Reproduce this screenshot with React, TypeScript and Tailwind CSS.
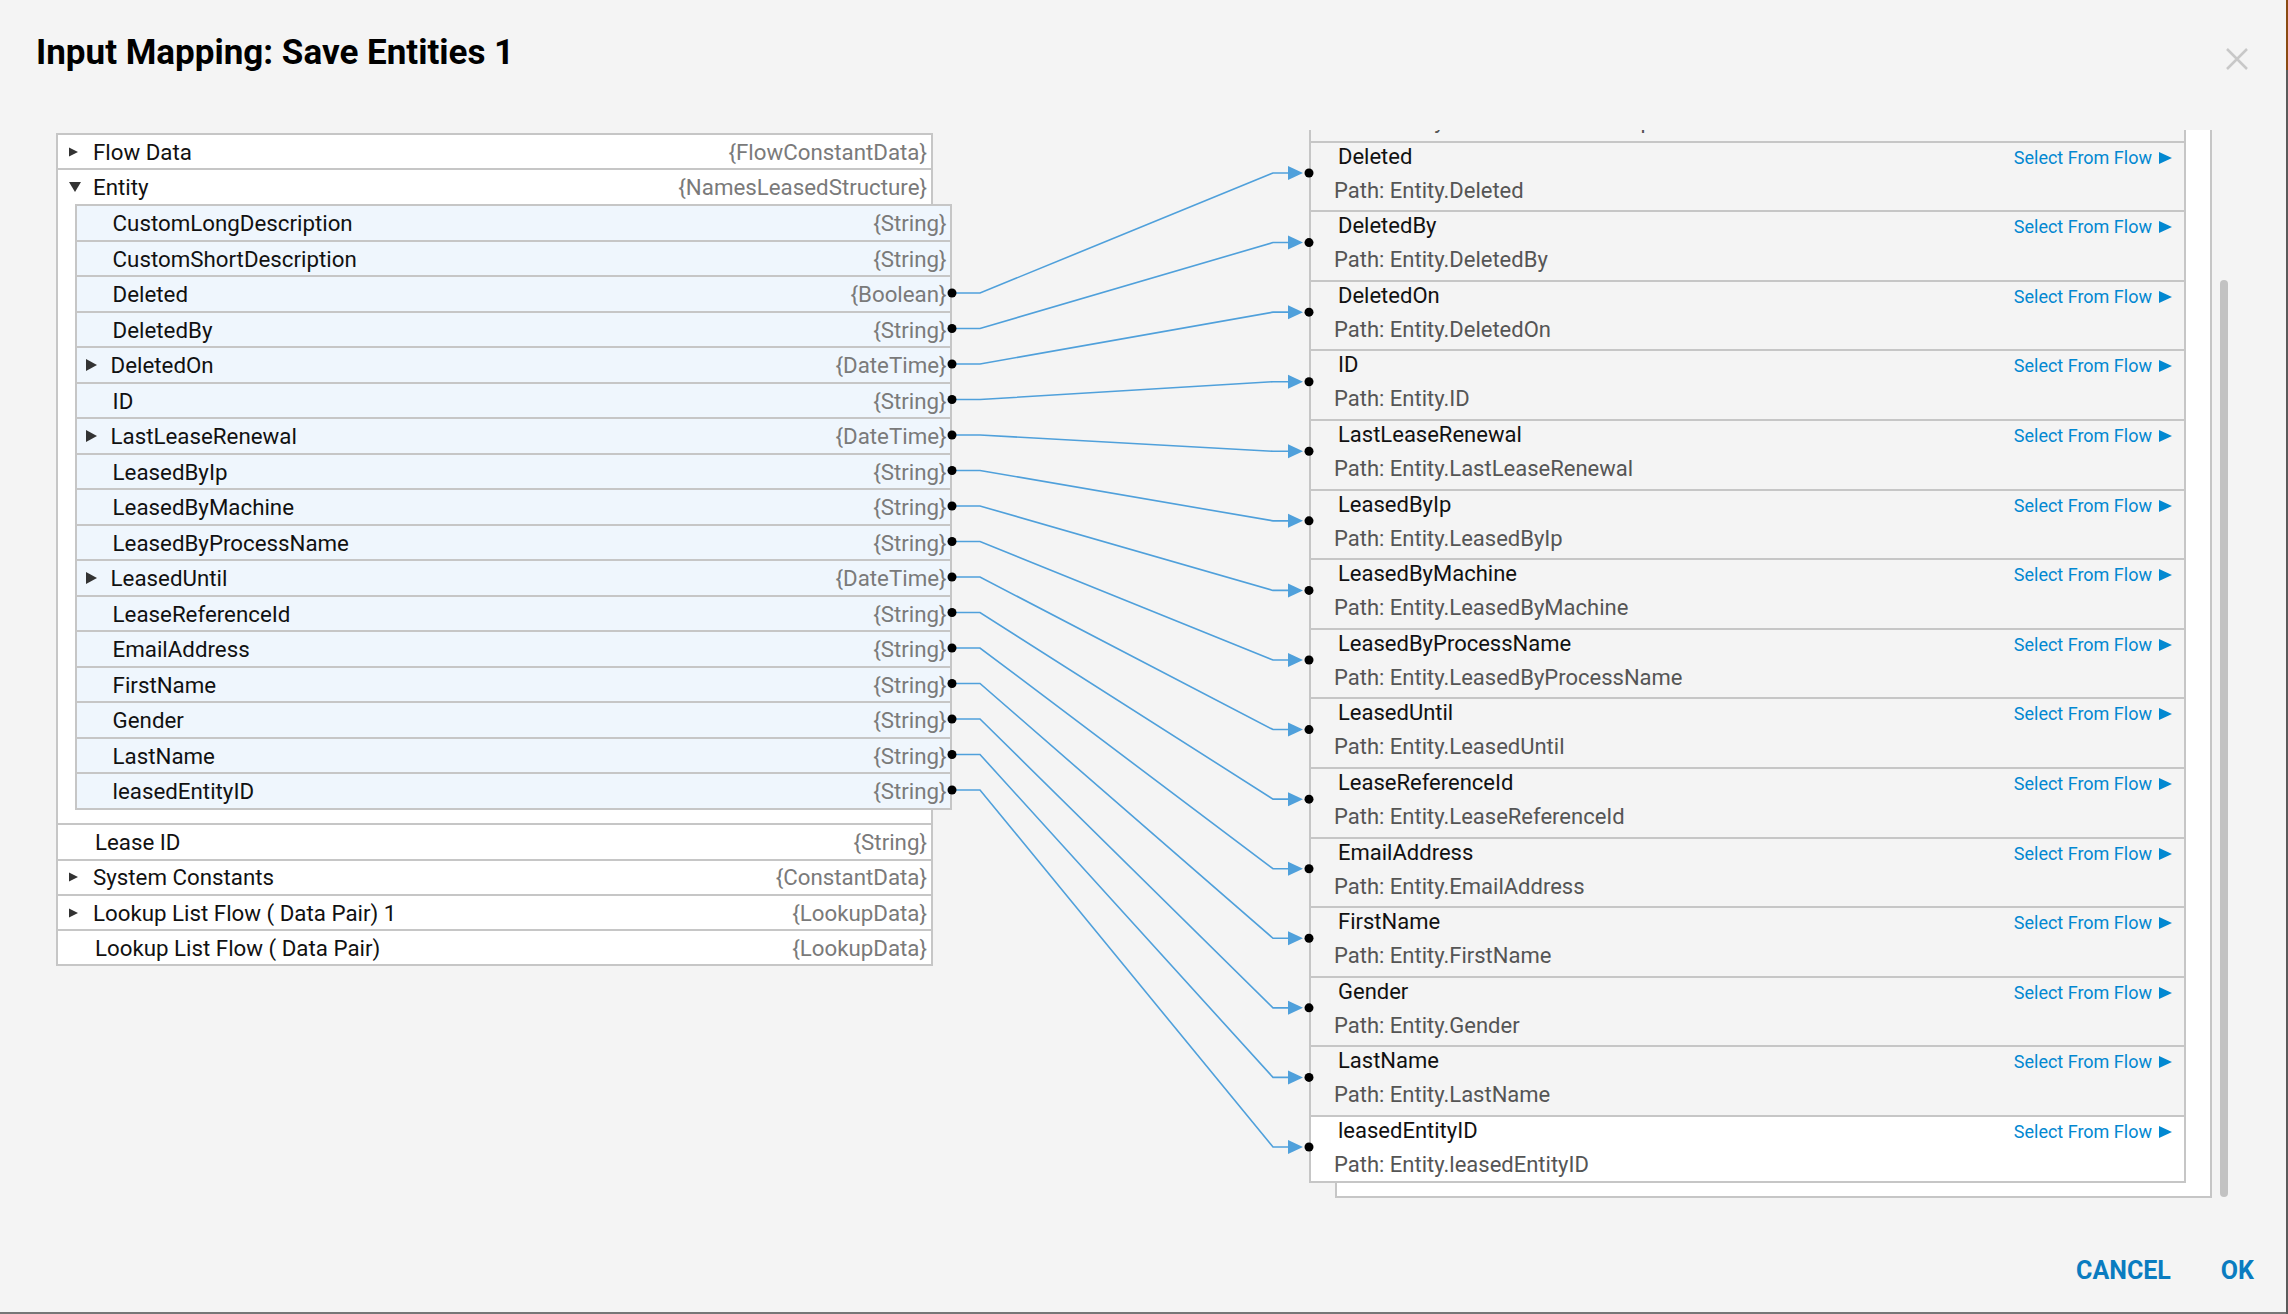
import React from 'react';

type Field = { name: string; type: string; expand?: boolean };

const entityFields: Field[] = [
  { name: 'CustomLongDescription', type: 'String' },
  { name: 'CustomShortDescription', type: 'String' },
  { name: 'Deleted', type: 'Boolean' },
  { name: 'DeletedBy', type: 'String' },
  { name: 'DeletedOn', type: 'DateTime', expand: true },
  { name: 'ID', type: 'String' },
  { name: 'LastLeaseRenewal', type: 'DateTime', expand: true },
  { name: 'LeasedByIp', type: 'String' },
  { name: 'LeasedByMachine', type: 'String' },
  { name: 'LeasedByProcessName', type: 'String' },
  { name: 'LeasedUntil', type: 'DateTime', expand: true },
  { name: 'LeaseReferenceId', type: 'String' },
  { name: 'EmailAddress', type: 'String' },
  { name: 'FirstName', type: 'String' },
  { name: 'Gender', type: 'String' },
  { name: 'LastName', type: 'String' },
  { name: 'leasedEntityID', type: 'String' },
];

const inputs = [
  'Deleted',
  'DeletedBy',
  'DeletedOn',
  'ID',
  'LastLeaseRenewal',
  'LeasedByIp',
  'LeasedByMachine',
  'LeasedByProcessName',
  'LeasedUntil',
  'LeaseReferenceId',
  'EmailAddress',
  'FirstName',
  'Gender',
  'LastName',
  'leasedEntityID',
];

// page coordinates of the connection points
const srcX = 952;
const dstX = 1309;
const srcY = (k: number) => 204 + 35.5 * k + 18;
const dstY = (i: number) => 141 + 69.57 * i + 32;

function Caret({ open, big }: { open?: boolean; big?: boolean }) {
  if (open) {
    return (
      <svg width="12" height="10" viewBox="0 0 12 10">
        <path d="M0 0H12L6 10Z" fill="#333" />
      </svg>
    );
  }
  return big ? (
    <svg width="11" height="12" viewBox="0 0 11 12">
      <path d="M0 0L11 6L0 12Z" fill="#333" />
    </svg>
  ) : (
    <svg width="10" height="10" viewBox="0 0 10 10">
      <path d="M0 0.5L9 5L0 9.5Z" fill="#333" />
    </svg>
  );
}

function OuterRow({ label, type, caret, open }: { label: string; type: string; caret?: boolean; open?: boolean }) {
  return (
    <div className="flex h-[35.3px] items-center border-t-2 border-[#c6c6c6] bg-white pl-[10.6px] pr-[4px] leading-[26px]">
      <div className="flex w-[24.4px] shrink-0 items-center">{caret && <Caret open={open} />}</div>
      <span className={`flex-1 text-[22.3px] text-[#111] ${caret ? '' : 'pl-[2px]'}`}>{label}</span>
      <span className="text-[22.3px] text-[#7a7a7a]">{`{${type}}`}</span>
    </div>
  );
}

function NestedRow({ field }: { field: Field }) {
  return (
    <div className="flex h-[35.5px] items-center border-t-2 border-[#c6c6c6] bg-[#eff6fd] pl-[9px] pr-[3px] leading-[26px]">
      <div className="flex w-[25px] shrink-0 items-center">{field.expand && <Caret big />}</div>
      <span className={`flex-1 text-[22.3px] text-[#111] ${field.expand ? '' : 'pl-[2px]'}`}>{field.name}</span>
      <span className="text-[22.3px] text-[#7a7a7a]">{`{${field.type}}`}</span>
    </div>
  );
}

function InputRow({ name, last }: { name: string; last?: boolean }) {
  return (
    <div
      className={`-ml-[28px] w-[877px] shrink-0 border-x-2 border-t-2 border-[#c6c6c6] pt-[2px] ${
        last ? 'h-[68px] border-b-2 bg-white' : 'h-[69.6px] bg-[#f4f4f4]'
      }`}
    >
      <div className="flex items-baseline justify-between pl-[27px] pr-[12px] leading-[24px]">
        <span className="text-[22px] text-[#111]">{name}</span>
        <span className="inline-flex items-center gap-[7px] text-[18px] text-[#0288d1]">
          Select From Flow
          <svg width="13" height="12" viewBox="0 0 13 12">
            <path d="M0 0L13 6L0 12Z" fill="#0288d1" />
          </svg>
        </span>
      </div>
      <div className="mt-[9px] pl-[23px] text-[22px] leading-[24px] text-[#555]">Path: Entity.{name}</div>
    </div>
  );
}

function Connectors() {
  return (
    <svg className="pointer-events-none absolute inset-0" width="2286" height="1312">
      {inputs.map((_, i) => {
        const y1 = srcY(i + 2);
        const y2 = dstY(i);
        return (
          <g key={i}>
            <path d={`M${srcX} ${y1}H980L1273 ${y2}H1290`} fill="none" stroke="#4fa0db" strokeWidth="1.6" />
            <path d={`M1288 ${y2 - 7}L1303 ${y2}L1288 ${y2 + 7}Z`} fill="#4fa0db" />
            <circle cx={srcX} cy={y1} r="4.5" fill="#000" />
            <circle cx={dstX} cy={y2} r="4.5" fill="#000" />
          </g>
        );
      })}
    </svg>
  );
}

export default function App() {
  return (
    <div className="flex h-[1314px] w-[2288px] overflow-hidden bg-[#f4f4f4] font-['Roboto',sans-serif]">
      <div className="relative flex h-full w-[2286px] flex-col border-b-2 border-[#767676]">
        <div className="flex h-[130px] shrink-0 items-start justify-between pl-[36px] pr-[38px] pt-[32px]">
          <h1 className="text-[35px] font-bold leading-[42px] text-black">Input Mapping: Save Entities 1</h1>
          <svg className="mt-[16px]" width="22" height="22" viewBox="0 0 22 22">
            <path d="M1 1L21 21M21 1L1 21" stroke="#c8c8c8" strokeWidth="2.5" />
          </svg>
        </div>

        <div className="flex shrink-0 items-start">
          {/* flow data tree */}
          <div className="ml-[56px] mt-[3px] w-[877px] shrink-0 border-x-2 border-b-2 border-[#c6c6c6] bg-white">
            <OuterRow label="Flow Data" type="FlowConstantData" caret />
            <div className="border-t-2 border-[#c6c6c6] pb-[13.5px]">
              <div className="flex h-[34px] items-center pl-[10.6px] pr-[4px] leading-[26px]">
                <div className="flex w-[24.4px] shrink-0 items-center">
                  <Caret open />
                </div>
                <span className="flex-1 text-[22.3px] text-[#111]">Entity</span>
                <span className="text-[22.3px] text-[#7a7a7a]">{'{NamesLeasedStructure}'}</span>
              </div>
              <div className="ml-[16.6px] w-[877px] border-x-2 border-b-2 border-[#c6c6c6]">
                {entityFields.map((f) => (
                  <NestedRow key={f.name} field={f} />
                ))}
              </div>
            </div>
            <OuterRow label="Lease ID" type="String" />
            <OuterRow label="System Constants" type="ConstantData" caret />
            <OuterRow label="Lookup List Flow ( Data Pair) 1" type="LookupData" caret />
            <OuterRow label="Lookup List Flow ( Data Pair)" type="LookupData" />
          </div>

          {/* inputs list, scrolled to the bottom */}
          <div className="ml-[372px] h-[1068px] w-[907px] shrink-0 overflow-hidden">
            <div className="-mt-[59px] ml-[30px] flex w-[877px] flex-col border-x-2 border-b-2 border-[#c6c6c6] bg-white pb-[13px]">
              <InputRow name="CustomShortDescription" />
              {inputs.map((n, i) => (
                <InputRow key={n} name={n} last={i === inputs.length - 1} />
              ))}
            </div>
          </div>
          <div className="ml-[8px] flex h-[1068px] w-[8px] flex-col justify-end pb-[1px]">
            <div className="h-[917px] w-[8px] rounded-full bg-[#c2c2c2]" />
          </div>
        </div>

        <div className="flex justify-end gap-[50px] pr-[32px] pt-[58px] text-[25px] font-bold leading-[30px] text-[#0a7cc0]">
          <span>CANCEL</span>
          <span>OK</span>
        </div>

        <Connectors />
      </div>
      <div className="flex h-full w-[2px] flex-col">
        <div className="h-[70px] bg-[#8a4a12]" />
        <div className="flex-1 bg-[#5a5a5a]" />
      </div>
    </div>
  );
}
